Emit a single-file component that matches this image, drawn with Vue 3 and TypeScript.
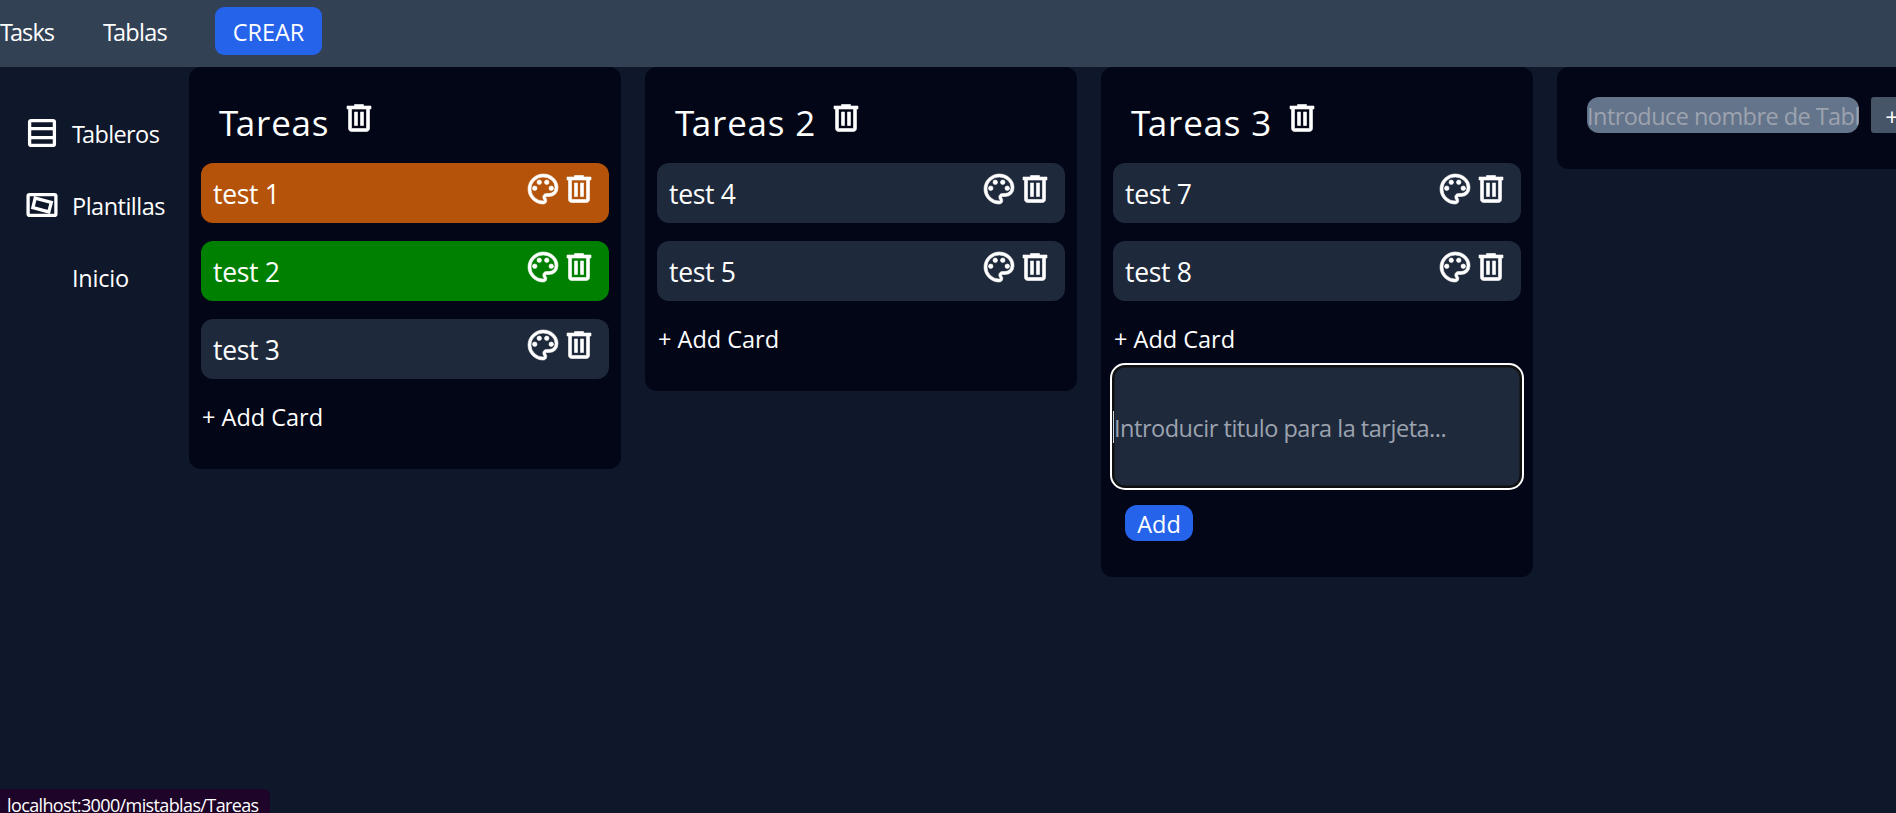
<script setup lang="ts">
interface Card {
  title: string
  tone?: string
}
interface Column {
  title: string
  cards: Card[]
  adding?: boolean
}

const columns: Column[] = [
  {
    title: 'Tareas',
    cards: [{ title: 'test 1', tone: 'orange' }, { title: 'test 2', tone: 'green' }, { title: 'test 3' }],
  },
  { title: 'Tareas 2', cards: [{ title: 'test 4' }, { title: 'test 5' }] },
  { title: 'Tareas 3', cards: [{ title: 'test 7' }, { title: 'test 8' }], adding: true },
]

const trashPath =
  'M7 21q-.825 0-1.412-.587T5 19V6H4V4h5V3h6v1h5v2h-1v13q0 .825-.587 1.413T17 21H7ZM17 6H7v13h10V6ZM9 17h2V8H9v9Zm4 0h2V8h-2v9Z'
const palettePath =
  'M12 22q-2.05 0-3.875-.788t-3.187-2.15q-1.363-1.362-2.15-3.187T2 12q0-2.075.813-3.9t2.2-3.175Q6.4 3.575 8.25 2.788T12.2 2q2 0 3.775.688t3.113 1.9q1.337 1.212 2.125 2.875T22 11.05q0 2.875-1.75 4.413T16 17h-1.85q-.225 0-.312.125t-.088.275q0 .3.375.863t.375 1.287q0 1.25-.687 1.85T12 22Zm.2-2q.2 0 .325-.113t.125-.287q0-.35-.375-.825T11.9 17.35q0-1.05.725-1.7T14.25 15H16q1.65 0 2.825-.963T20 11.05q0-3.025-2.312-5.038T12.2 4Q8.8 4 6.4 6.325T4 12q0 3.325 2.338 5.663T12 20h.2Z'
</script>

<template>
  <div class="page">
    <nav class="nav">
      <span class="brand">Tasks</span>
      <span class="link">Tablas</span>
      <button class="create">CREAR</button>
    </nav>
    <div class="body">
      <aside class="side">
        <a class="item">
          <svg class="side-icon" viewBox="0 0 36 36" fill="none" stroke="#fff" stroke-width="3.3">
            <rect x="5.6" y="5.6" width="24.8" height="24.8" rx="1.5" />
            <path d="M5.6 13.7h24.8M5.6 22.7h24.8" />
          </svg>
          <span class="side-label boards">Tableros</span>
        </a>
        <a class="item">
          <svg class="side-icon" viewBox="0 0 36 36" fill="none" stroke="#fff" stroke-width="3.3">
            <rect x="4.1" y="7.6" width="27.8" height="20.8" rx="1.5" />
            <path d="M11.2 11.1L27.3 15.5L24.8 24.9L8.9 20.5Z" />
          </svg>
          <span class="side-label">Plantillas</span>
        </a>
        <a class="item">
          <span class="side-icon"></span>
          <span class="side-label home">Inicio</span>
        </a>
      </aside>
      <main class="board">
        <section v-for="col in columns" :key="col.title" class="column">
          <header class="head">
            <h2 class="title">{{ col.title }}</h2>
            <svg class="icon" viewBox="0 0 24 24"><path :d="trashPath" /></svg>
          </header>
          <div v-for="card in col.cards" :key="card.title" class="card" :class="card.tone">
            <span class="card-title">{{ card.title }}</span>
            <div class="actions">
              <svg class="icon" viewBox="0 0 24 24">
                <path :d="palettePath" />
                <circle cx="6.5" cy="11.5" r="1.5" />
                <circle cx="9.5" cy="7.5" r="1.5" />
                <circle cx="14.5" cy="7.5" r="1.5" />
                <circle cx="17.5" cy="11.5" r="1.5" />
              </svg>
              <svg class="icon" viewBox="0 0 24 24"><path :d="trashPath" /></svg>
            </div>
          </div>
          <button class="add-card">+ Add Card</button>
          <div v-if="col.adding" class="form">
            <div class="entry"><span class="caret"></span><span class="hint">Introducir titulo para la tarjeta...</span></div>
            <button class="add">Add</button>
          </div>
        </section>
        <section class="new-column">
          <div class="name-field">Introduce nombre de Tabl</div>
          <button class="plus">+</button>
        </section>
      </main>
    </div>
    <div class="status">localhost:3000/mistablas/Tareas</div>
  </div>
</template>

<style>
html,
body {
  margin: 0;
  overflow: hidden;
  background: #0f172a;
}
</style>

<style scoped>
.page {
  position: relative;
  box-sizing: border-box;
  width: 1896px;
  height: 813px;
  overflow: hidden;
  background: #0f172a;
  color: #fff;
  font-family: 'Open Sans', 'Noto Sans', sans-serif;
  font-size: 23.5px;
  line-height: 36px;
  white-space: nowrap;
}
button {
  padding: 0;
  border: 0;
  background: none;
  color: inherit;
  font: inherit;
  letter-spacing: inherit;
}
.nav {
  display: flex;
  height: 67px;
  background: #334155;
}
.brand {
  width: 103px;
  padding-top: 14px;
  letter-spacing: -0.9px;
}
.link {
  width: 112px;
  padding-top: 14px;
  letter-spacing: -0.7px;
}
.brand::first-letter,
.link::first-letter,
.boards::first-letter {
  letter-spacing: -3px;
}
.create {
  width: 107px;
  height: 48px;
  margin-top: 7px;
  padding-top: 2px;
  border-radius: 9px;
  background: #2563eb;
}
.body {
  display: flex;
}
.side {
  flex: none;
  box-sizing: border-box;
  width: 189px;
  padding: 48px 0 0 24px;
}
.item {
  display: flex;
  height: 72px;
}
.side-icon {
  flex: none;
  width: 36px;
  height: 36px;
  margin-right: 12px;
}
.side-label {
  padding-top: 1px;
  letter-spacing: -0.5px;
}
.boards {
  letter-spacing: -0.6px;
}
.home {
  letter-spacing: -0.2px;
}
.board {
  display: flex;
  align-items: flex-start;
  gap: 24px;
}
.column {
  flex: none;
  box-sizing: border-box;
  width: 432px;
  padding: 30px 12px 36px;
  border-radius: 12px;
  background: #020617;
}
.head {
  display: flex;
  height: 66px;
  padding-left: 18px;
}
.head .icon {
  margin-top: 3px;
}
.title {
  margin: 2px 12px 0 0;
  font-size: 35px;
  font-weight: 400;
  line-height: 48px;
  letter-spacing: 0.8px;
}
.title::first-letter {
  letter-spacing: -2.5px;
}
.icon {
  flex: none;
  width: 36px;
  height: 36px;
  fill: #fff;
  stroke: #fff;
  stroke-width: 0.4;
}
.card {
  display: flex;
  justify-content: space-between;
  box-sizing: border-box;
  height: 60px;
  margin-bottom: 18px;
  padding: 8px 12px;
  border-radius: 12px;
  background: #1e293b;
}
.orange {
  background: #b45309;
}
.green {
  background: #008000;
}
.card-title {
  padding-top: 5px;
  font-size: 26.5px;
  letter-spacing: -0.3px;
}
.actions {
  display: flex;
}
.add-card {
  display: block;
  height: 36px;
  padding: 2px 0 0 1px;
}
.form {
  padding-top: 11px;
}
.entry {
  display: flex;
  align-items: center;
  box-sizing: border-box;
  height: 121px;
  border-radius: 12px;
  background: #1e293b;
  box-shadow: inset 0 0 0 1.5px #101010, 0 0 0 1px #101010, 0 0 0 3px #fff;
}
.caret {
  width: 1px;
  height: 32px;
  background: #cbd5e1;
}
.hint {
  padding-top: 2px;
  color: #9ca3af;
  letter-spacing: -0.48px;
}
.add {
  display: block;
  width: 68px;
  height: 36px;
  margin: 18px 0 0 12px;
  padding-top: 1px;
  border-radius: 12px;
  background: #2563eb;
}
.new-column {
  display: flex;
  flex: none;
  box-sizing: border-box;
  width: 432px;
  height: 102px;
  padding: 30px;
  border-radius: 12px;
  background: #020617;
}
.name-field {
  flex: none;
  width: 272px;
  height: 36px;
  margin-right: 12px;
  overflow: hidden;
  border-radius: 12px;
  background: #64748b;
  color: #9ca3af;
  line-height: 38px;
  letter-spacing: -0.55px;
}
.plus {
  flex: none;
  width: 42px;
  height: 36px;
  padding-top: 2px;
  border-radius: 3px;
  background: #475569;
}
.status {
  position: absolute;
  left: 0;
  bottom: 0;
  box-sizing: border-box;
  width: 270px;
  height: 24px;
  padding-left: 7px;
  overflow: hidden;
  border-radius: 0 6px 0 0;
  background: #1f0429;
  font-size: 18px;
  line-height: 33px;
  letter-spacing: -0.62px;
}
</style>
